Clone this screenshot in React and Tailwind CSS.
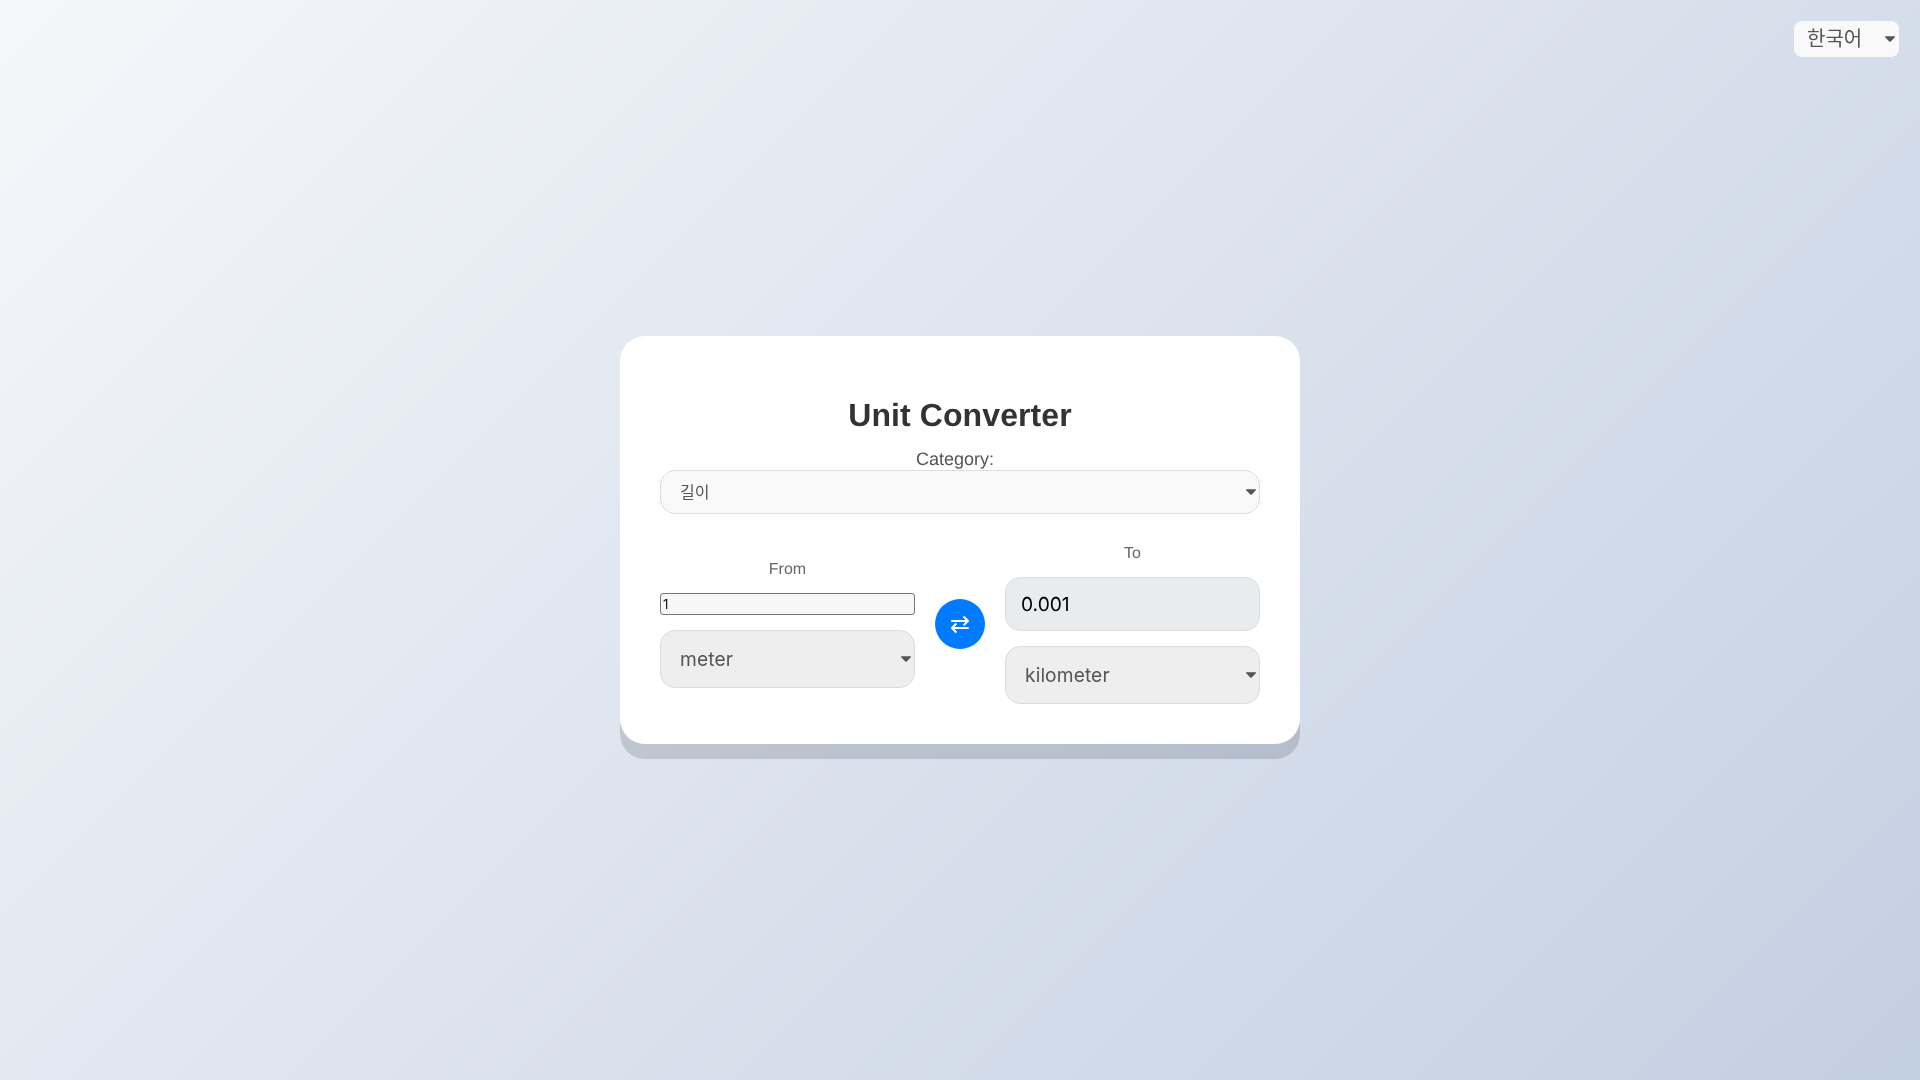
import { useState } from 'react';

const sans = "font-['Liberation_Sans','Noto_Sans_CJK_KR',sans-serif]";

const units = ['meter', 'kilometer', 'centimeter', 'millimeter', 'mile', 'yard', 'foot', 'inch'];

function Arrow() {
  return (
    <svg
      viewBox="0 0 292.4 292.4"
      className="absolute right-[4px] top-1/2 -translate-y-1/2 w-[10px] h-[10px] pointer-events-none fill-[#555]"
    >
      <path d="M287 69.4a17.6 17.6 0 0 0-13-5.4H18.4c-5 0-9.3 1.8-12.9 5.4A17.6 17.6 0 0 0 0 82.2c0 5 1.8 9.3 5.4 12.9l128 127.9c3.6 3.6 7.8 5.4 12.8 5.4s9.2-1.8 12.8-5.4L287 95c3.5-3.5 5.4-7.8 5.4-12.8 0-5-1.9-9.2-5.5-12.8z" />
    </svg>
  );
}

function UnitSelect({ value, onChange }) {
  return (
    <div className="relative">
      <select
        value={value}
        onChange={(e) => onChange(e.target.value)}
        className="appearance-none block w-full h-[58px] pl-[19px] pr-[20px] border border-[#ddd] rounded-[15px] bg-[#eee] text-[19.2px] tracking-[0.1px] text-[#555] font-['Inter',sans-serif]"
      >
        {units.map((u) => (
          <option key={u} value={u}>{u}</option>
        ))}
      </select>
      <Arrow />
    </div>
  );
}

export default function App() {
  const [from, setFrom] = useState('meter');
  const [to, setTo] = useState('kilometer');
  const [amount, setAmount] = useState('1');

  const swap = () => {
    setFrom(to);
    setTo(from);
  };

  return (
    <div className={`relative min-h-screen flex items-center justify-center leading-normal [text-rendering:geometricPrecision] bg-[linear-gradient(135deg,#f5f7fa_0%,#c3cfe2_100%)] ${sans}`}>
      <div className="absolute top-[21px] right-[21px] will-change-transform">
        <select
          defaultValue="ko"
          className="appearance-none block w-[105px] h-[36px] pl-[13px] rounded-[8px] bg-[#f9f9f9] text-[20px] text-[#555] font-['Inter','Noto_Sans_CJK_KR',sans-serif]"
        >
          <option value="ko">한국어</option>
          <option value="en">English</option>
        </select>
        <Arrow />
      </div>

      <div className="w-[680px] h-[408px] p-[40px] bg-white rounded-[25px] shadow-[0_15px_0_rgba(15,20,40,0.15)] text-center will-change-transform">
        <h1 className="mt-[21px] mb-[13px] text-[32px] tracking-[0.1px] font-bold text-[#333] leading-[37px]">Unit Converter</h1>
        <div className="h-[23px] leading-[25px]">
          <label className="mr-[10px] text-[18px] text-[#555]">Category:</label>
        </div>
        <div className="relative">
          <select
            defaultValue="length"
            className="appearance-none block w-full h-[44px] pl-[19px] pr-[20px] pb-[2px] border border-[#ddd] rounded-[15px] bg-[#f9f9f9] text-[16px] text-[#555] font-['Noto_Sans_CJK_KR',sans-serif]"
          >
            <option value="length">길이</option>
            <option value="weight">무게</option>
          </select>
          <Arrow />
        </div>

        <div className="flex items-center gap-[20px] mt-[29px]">
          <div className="w-[255px] flex flex-col gap-[15px]">
            <label className="h-[19px] text-[16px] leading-[22px] text-[#666]">From</label>
            <input
              type="text"
              value={amount}
              onChange={(e) => setAmount(e.target.value)}
              className="w-full h-[22px] px-[2px] border border-[#767676] rounded-[3px] bg-[#f7f7f7] text-[13.33px] text-[#111] text-left font-['Inter',sans-serif]"
            />
            <UnitSelect value={from} onChange={setFrom} />
          </div>

          <button
            onClick={swap}
            className="w-[50px] h-[50px] shrink-0 rounded-full bg-[#007bff] text-white text-[24px] leading-none font-['DejaVu_Sans',sans-serif]"
          >
            ⇄
          </button>

          <div className="w-[255px] flex flex-col gap-[15px]">
            <label className="h-[19px] text-[16px] leading-[22px] text-[#666]">To</label>
            <div className="h-[54px] px-[15px] flex items-center border border-[#ddd] rounded-[15px] bg-[#e9ecef] text-[19.2px] text-black text-left font-['Inter',sans-serif]">
              0.001
            </div>
            <UnitSelect value={to} onChange={setTo} />
          </div>
        </div>
      </div>
    </div>
  );
}
